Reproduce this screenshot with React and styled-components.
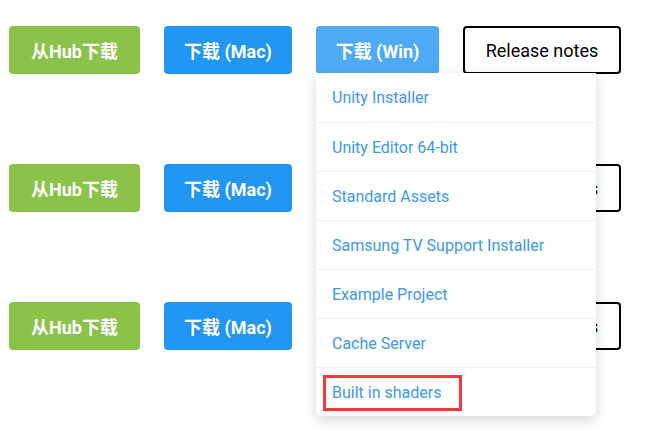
import React from 'react';
import styled, { createGlobalStyle } from 'styled-components';

const GlobalStyle = createGlobalStyle`
  html, body {
    margin: 0;
    padding: 0;
    background: #fff;
    font-family: Roboto, "Noto Sans CJK SC", sans-serif;
  }
`;

const Page = styled.div`
  display: flex;
  flex-direction: column;
  gap: 90px;
  min-height: 100vh;
  box-sizing: border-box;
  padding: 26px 0 0 9px;
`;

const Row = styled.div`
  display: flex;
  gap: 24px;
  align-items: flex-start;
  position: relative;
  z-index: ${(p) => (p.$open ? 5 : 1)};
`;

const Button = styled.button`
  height: 48px;
  padding: 0;
  border-radius: 4px;
  border: ${(p) => (p.$outline ? '2px solid #000' : 'none')};
  background: ${(p) => p.$bg || '#fff'};
  color: ${(p) => (p.$outline ? '#000' : '#fff')};
  font-family: Roboto, "Noto Sans CJK SC", sans-serif;
  font-size: 18px;
  font-weight: ${(p) => (p.$outline ? 400 : 700)};
  white-space: nowrap;
  cursor: pointer;
  box-sizing: border-box;
`;

const DropWrap = styled.div`
  position: relative;
`;

const Menu = styled.ul`
  position: absolute;
  top: 47px;
  left: 0;
  width: 280px;
  margin: 0;
  padding: 0;
  list-style: none;
  background: #fff;
  border-radius: 0 0 5px 5px;
  box-shadow: 0 4px 14px rgba(0, 0, 0, 0.16);
`;

const Item = styled.li`
  height: 49px;
  display: flex;
  align-items: center;
  padding: 0 16px;
  border-top: ${(p) => (p.$first ? 'none' : '1px solid #eeeeee')};
  box-sizing: border-box;
  color: #3d98ee;
  font-size: 16px;
  position: relative;
`;

const Highlight = styled.span`
  position: absolute;
  left: 7px;
  top: 7px;
  width: 139px;
  height: 36px;
  border: 3px solid #f23a3a;
  box-sizing: border-box;
`;

const items = [
  'Unity Installer',
  'Unity Editor 64-bit',
  'Standard Assets',
  'Samsung TV Support Installer',
  'Example Project',
  'Cache Server',
  'Built in shaders',
];

const ButtonRow = ({ open }) => (
  <Row $open={open}>
    <Button $bg="#8bc34a" style={{ width: 131 }}>从Hub下载</Button>
    <Button $bg="#2196f3" style={{ width: 128 }}>下载 (Mac)</Button>
    <DropWrap>
      <Button $bg={open ? '#4dabf5' : '#2196f3'} style={{ width: 123 }}>下载 (Win)</Button>
      {open && (
        <Menu>
          {items.map((t, i) => (
            <Item key={t} $first={i === 0}>
              {t}
              {i === items.length - 1 && <Highlight />}
            </Item>
          ))}
        </Menu>
      )}
    </DropWrap>
    <Button $outline style={{ width: 158 }}>Release notes</Button>
  </Row>
);

export default function App() {
  return (
    <>
      <GlobalStyle />
      <Page>
        <ButtonRow open />
        <ButtonRow />
        <ButtonRow />
      </Page>
    </>
  );
}
